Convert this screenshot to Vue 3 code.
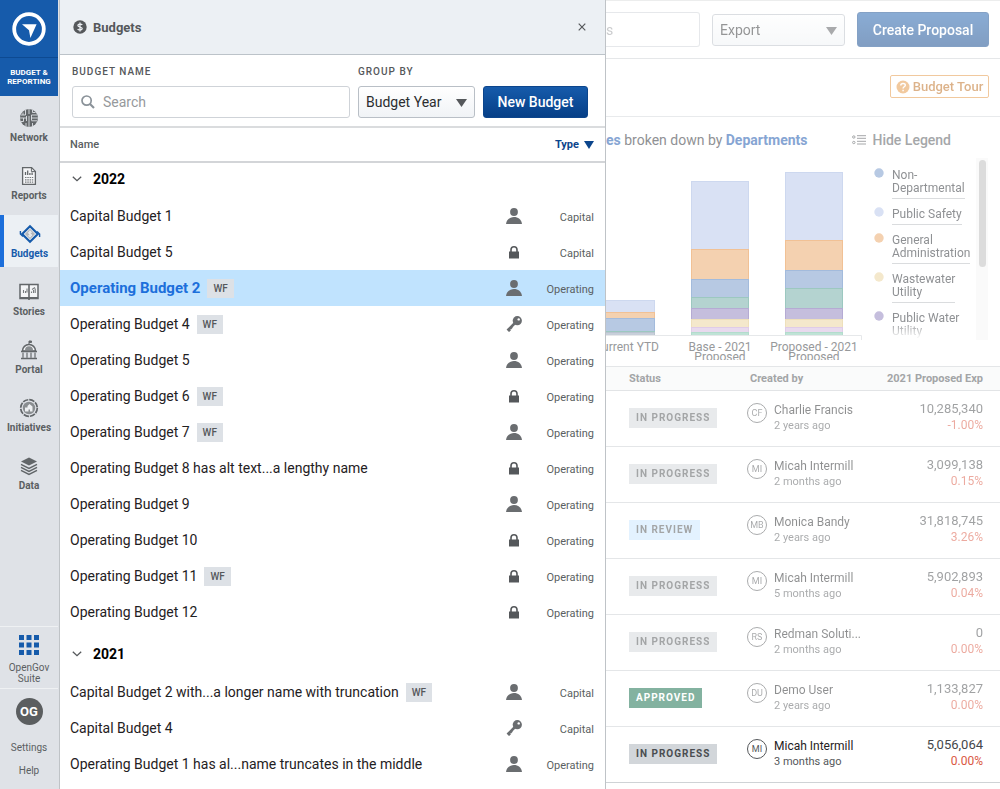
<script setup>
import { ref } from 'vue'

const nav = ['Network', 'Reports', 'Budgets', 'Stories', 'Portal', 'Initiatives', 'Data']
const groupBy = ref('Budget Year')
const search = ref('')

const groups = [
  {
    year: '2022',
    rows: [
      { name: 'Capital Budget 1', icon: 'user', type: 'Capital' },
      { name: 'Capital Budget 5', icon: 'lock', type: 'Capital' },
      { name: 'Operating Budget 2', wf: true, icon: 'user', type: 'Operating', selected: true },
      { name: 'Operating Budget 4', wf: true, icon: 'key', type: 'Operating' },
      { name: 'Operating Budget 5', icon: 'user', type: 'Operating' },
      { name: 'Operating Budget 6', wf: true, icon: 'lock', type: 'Operating' },
      { name: 'Operating Budget 7', wf: true, icon: 'user', type: 'Operating' },
      { name: 'Operating Budget 8 has alt text...a lengthy name', icon: 'lock', type: 'Operating' },
      { name: 'Operating Budget 9', icon: 'user', type: 'Operating' },
      { name: 'Operating Budget 10', icon: 'lock', type: 'Operating' },
      { name: 'Operating Budget 11', wf: true, icon: 'lock', type: 'Operating' },
      { name: 'Operating Budget 12', icon: 'lock', type: 'Operating' }
    ]
  },
  {
    year: '2021',
    rows: [
      { name: 'Capital Budget 2 with...a longer name with truncation', wf: true, icon: 'user', type: 'Capital' },
      { name: 'Capital Budget 4', icon: 'key', type: 'Capital' },
      { name: 'Operating Budget 1 has al...name truncates in the middle', icon: 'user', type: 'Operating' }
    ]
  }
]

const proposals = [
  { status: 'In Progress', kind: 'progress', initials: 'CF', name: 'Charlie Francis', ago: '2 years ago', amount: '10,285,340', pct: '-1.00%' },
  { status: 'In Progress', kind: 'progress', initials: 'MI', name: 'Micah Intermill', ago: '2 months ago', amount: '3,099,138', pct: '0.15%' },
  { status: 'In Review', kind: 'review', initials: 'MB', name: 'Monica Bandy', ago: '2 years ago', amount: '31,818,745', pct: '3.26%' },
  { status: 'In Progress', kind: 'progress', initials: 'MI', name: 'Micah Intermill', ago: '5 months ago', amount: '5,902,893', pct: '0.04%' },
  { status: 'In Progress', kind: 'progress', initials: 'RS', name: 'Redman Soluti...', ago: '2 months ago', amount: '0', pct: '0.00%' },
  { status: 'Approved', kind: 'approved', initials: 'DU', name: 'Demo User', ago: '2 years ago', amount: '1,133,827', pct: '0.00%' },
  { status: 'In Progress', kind: 'progress', initials: 'MI', name: 'Micah Intermill', ago: '3 months ago', amount: '5,056,064', pct: '0.00%', current: true }
]

const legend = [
  { lines: ['Non-', 'Departmental'], color: '#b7c9e3' },
  { lines: ['Public Safety'], color: '#d9e1f4' },
  { lines: ['General', 'Administration'], color: '#f4d1b0' },
  { lines: ['Wastewater', 'Utility'], color: '#f4e8cc' },
  { lines: ['Public Water', 'Utility'], color: '#c5bedd' }
]

const palette = {
  safety: ['#d9e1f4', '#cdd8ef'],
  admin: ['#f4d1b0', '#f1c195'],
  non: ['#b7c9e3', '#a3bbdc'],
  teal: ['#b4d3d0', '#9cc8c0'],
  water: ['#c5bedd', '#b5abd3'],
  waste: ['#f4e8cc', '#eee0bb'],
  pink: ['#e8daee', '#dfcce8'],
  mint: ['#bfe3d6', '#b3dccd'],
  gray: ['#c8cfda', '#b9c4d0']
}
const bars = [
  { x: -10, w: 59, segs: [['safety', 142, 12], ['admin', 154, 6], ['non', 160, 13], ['teal', 173, 1], ['gray', 174, 3]] },
  { x: 85, w: 58, segs: [['safety', 23, 68], ['admin', 91, 30], ['non', 121, 18], ['teal', 139, 11], ['water', 150, 11], ['waste', 161, 8], ['pink', 169, 5], ['mint', 174, 3]] },
  { x: 179, w: 58, segs: [['safety', 14, 68], ['admin', 82, 30], ['non', 112, 18], ['teal', 130, 20], ['water', 150, 11], ['waste', 161, 8], ['pink', 169, 5], ['mint', 174, 3]] }
]
</script>

<template>
  <div class="app">
    <aside class="sidebar">
      <a class="logo" href="#" aria-label="Home">
        <svg width="34" height="34" viewBox="0 0 34 34">
          <circle cx="17" cy="17" r="14.8" fill="none" stroke="#fff" stroke-width="3.8" />
          <path d="M10 12.3H24.6L18.4 26L17 18.2Z" fill="#fff" />
        </svg>
      </a>
      <div class="product">BUDGET &amp;<br />REPORTING</div>
      <nav class="nav">
        <a v-for="n in nav" :key="n" href="#" class="nav-item" :class="{ active: n === 'Budgets' }">
          <svg v-if="n === 'Network'" width="20" height="20" viewBox="0 0 20 20">
            <circle cx="10" cy="10" r="9" fill="#626669" />
            <path d="M10 1V6M10 8V19M1 10H8M12 10H19M6.500 2V7H2M13.500 2V4.500H16.500M12.500 7H18.500M12.500 7V12.500M4.500 10V13.500H2M7.500 8V13M7 15V18.500M13.500 15V18.500M12.500 12.800H18M4 7V4.500" fill="none" stroke="#dfe2e7" stroke-width=".9" />
          </svg>
          <svg v-else-if="n === 'Reports'" width="20" height="20" viewBox="0 0 20 20">
            <path d="M3.600 1.600H12.600L16.400 5.400V18.400H3.600Z" fill="#f4f5f7" stroke="#626669" stroke-width="1.300" />
            <path d="M12.400 1.600V5.600H16.400" fill="none" stroke="#626669" />
            <path d="M6.500 9V6M8.700 9V4.500M10.900 9V7M13.100 9V6.500" stroke="#626669" stroke-width="1.300" />
            <path d="M6 11.500H14.200M6 13.800H14.200M6 16.100H14.200" stroke="#777b7e" stroke-dasharray="1.500 .8" stroke-width="1.200" />
          </svg>
          <svg v-else-if="n === 'Budgets'" width="22" height="20" viewBox="0 0 22 20">
            <path d="M11 2.200L18.800 10L11 17.800L3.200 10Z" fill="#f4f7fa" stroke="#165bab" stroke-width="2.200" />
            <path d="M11 4.800L16.200 10L11 15.200L5.800 10Z" fill="#b4b8bd" />
            <path d="M12.800 8.500C12.400 7.600 9.400 7.600 9.400 8.900S12.700 9.700 12.700 11.100S9.600 12.500 9.200 11.500M11 6.600V13.400" fill="none" stroke="#f4f7fa" />
            <path d="M1.400 7V10L4 12.500M20.600 13V10L18 7.500" fill="none" stroke="#165bab" stroke-width="1.400" />
          </svg>
          <svg v-else-if="n === 'Stories'" width="20" height="20" viewBox="0 0 20 20">
            <path d="M1 2.500H19V16.500H1Z" fill="#f4f5f7" stroke="#626669" stroke-width="1.500" />
            <path d="M10 3V18" stroke="#626669" stroke-width="1.600" />
            <path d="M1 16H19" stroke="#626669" stroke-width="2" />
            <path d="M4.500 11V8M6.500 11V9M8 10.500V6.500M12.500 11V9.500M14.500 11V8M16.200 11V6.500M13 7.500L16 5.500" fill="none" stroke="#777b7e" stroke-width="1.100" />
          </svg>
          <svg v-else-if="n === 'Portal'" width="20" height="20" viewBox="0 0 20 20">
            <path d="M10 4V1H12.500V2.500H10" fill="#626669" stroke="#626669" />
            <path d="M3.500 11A6.500 6.500 0 0 1 16.500 11Z" fill="#f4f5f7" stroke="#626669" stroke-width="1.500" />
            <path d="M6 10A4 3.800 0 0 1 14 10Z" fill="#8a8e91" />
            <path d="M2 11.500H18M2 18.500H18" stroke="#626669" stroke-width="1.500" />
            <path d="M4 12.500V18M8 12.500V18M12 12.500V18M16 12.500V18" stroke="#8a8e91" stroke-width="1.700" />
          </svg>
          <svg v-else-if="n === 'Initiatives'" width="20" height="20" viewBox="0 0 20 20">
            <circle cx="10" cy="10" r="8.300" fill="none" stroke="#626669" stroke-width="1.700" stroke-dasharray="5.500 1.019" />
            <circle cx="10" cy="10" r="6.200" fill="#8a8e91" />
            <path d="M6 13.500V9.500H8.500V8L10.500 6L13.500 8.500V13.500H11V11.500H9.500V13.500Z" fill="#eef0f2" />
          </svg>
          <svg v-else width="20" height="20" viewBox="0 0 20 20">
            <path d="M10 1.500L18 5.500L10 9.500L2 5.500Z" fill="#626669" />
            <path d="M2 8.300L10 12.300L18 8.300M2 11.300L10 15.300L18 11.300M2 14.300L10 18.300L18 14.300" fill="none" stroke="#626669" stroke-width="1.500" />
          </svg>
          <span>{{ n }}</span>
        </a>
      </nav>
      <a class="suite" href="#">
        <svg width="20" height="20" viewBox="0 0 20 20" fill="#165bab">
          <path d="M0 0H5V5H0ZM7.500 0H12.500V5H7.500ZM15 0H20V5H15ZM0 7.500H5V12.500H0ZM7.500 7.500H12.500V12.500H7.500ZM15 7.500H20V12.500H15ZM0 15H5V20H0ZM7.500 15H12.500V20H7.500ZM15 15H20V20H15Z" />
        </svg>
        <span>OpenGov<br />Suite</span>
      </a>
      <div class="account">
        <button class="og" type="button">OG</button>
        <a href="#">Settings</a>
        <a href="#">Help</a>
      </div>
    </aside>

    <section class="drawer">
      <header class="drawer-head">
        <svg width="14" height="14" viewBox="0 0 14 14">
          <circle cx="7" cy="7" r="6.700" fill="#55585b" />
          <path d="M9.200 5C8.600 3.700 4.900 3.700 4.900 5.500S9.200 6.700 9.200 8.600S5.300 10.300 4.700 8.900M7 2.600V11.400" fill="none" stroke="#ecf0f4" stroke-width="1.300" />
        </svg>
        <h1>Budgets</h1>
        <button class="close" type="button" aria-label="Close">
          <svg width="8" height="8" viewBox="0 0 8 8"><path d="M.7 .7L7.300 7.300M7.300 .7L.7 7.300" stroke="#55585b" stroke-width="1.200" /></svg>
        </button>
      </header>

      <form class="filters" @submit.prevent>
        <div class="field grow">
          <label for="budget-name">BUDGET NAME</label>
          <div class="control">
            <svg class="mag" width="14" height="14" viewBox="0 0 14 14"><circle cx="5.600" cy="5.600" r="4.600" fill="none" stroke="#8a9299" stroke-width="1.700" /><path d="M9 9L13 13" stroke="#8a9299" stroke-width="2.200" /></svg>
            <input id="budget-name" v-model="search" type="text" placeholder="Search" />
          </div>
        </div>
        <div class="field">
          <label for="group-by">GROUP BY</label>
          <div class="control">
            <select id="group-by" v-model="groupBy" class="select"><option>Budget Year</option></select>
            <svg class="arrow" width="11" height="8" viewBox="0 0 11 8"><path d="M0 0H11L5.500 8Z" fill="#55585b" /></svg>
          </div>
        </div>
        <button class="primary" type="submit">New Budget</button>
      </form>

      <table class="budgets">
        <thead>
          <tr>
            <th class="c-name">Name</th>
            <th class="c-icon"></th>
            <th class="c-type"><button class="sort" type="button">Type <svg width="10" height="8" viewBox="0 0 10 8"><path d="M0 0H10L5 8Z" fill="#0c458c" /></svg></button></th>
          </tr>
        </thead>
        <tbody v-for="g in groups" :key="g.year">
          <tr class="group">
            <th colspan="3">
              <button type="button">
                <svg width="10" height="6" viewBox="0 0 10 6"><path d="M.8 .8L5 4.700L9.200 .8" fill="none" stroke="#55585b" stroke-width="1.300" /></svg>
                {{ g.year }}
              </button>
            </th>
          </tr>
          <tr v-for="r in g.rows" :key="r.name" class="budget" :class="{ selected: r.selected }">
            <td class="c-name"><div class="name"><a href="#">{{ r.name }}</a><span v-if="r.wf" class="wf">WF</span></div></td>
            <td class="c-icon">
              <svg v-if="r.icon === 'user'" width="16" height="16" viewBox="0 0 16 16" fill="#6a6d70"><circle cx="8" cy="4" r="3.900" /><path d="M0 16C.5 11.500 4 9 8 9S15.500 11.500 16 16Z" /></svg>
              <svg v-else-if="r.icon === 'lock'" width="16" height="16" viewBox="0 0 16 16"><path d="M3 7.500H13V14.500H3Z" fill="#55585b" /><path d="M5 8V5.800A3 3 0 0 1 11 5.800V8" fill="none" stroke="#55585b" stroke-width="1.600" /></svg>
              <svg v-else width="16" height="16" viewBox="0 0 16 16"><circle cx="11.300" cy="4.700" r="4.600" fill="#6a6d70" /><circle cx="12.700" cy="3.400" r="1.200" fill="#fff" /><path d="M8.500 7.500L1.500 14.500M2 13L4 15.200M4.500 11L6 12.500" stroke="#6a6d70" stroke-width="2.600" /></svg>
            </td>
            <td class="c-type">{{ r.type }}</td>
          </tr>
        </tbody>
      </table>
    </section>

    <main class="main">
      <div class="toolbar faded">
        <input class="filter" type="text" placeholder="s" aria-label="Filter proposals" />
        <div class="control export">
          <select class="select" aria-label="Export"><option>Export</option></select>
          <svg class="arrow" width="11" height="8" viewBox="0 0 11 8"><path d="M0 0H11L5.500 8Z" fill="#55585b" /></svg>
        </div>
        <button class="primary create" type="button">Create Proposal</button>
      </div>
      <div class="tour-row faded">
        <button class="tour" type="button">
          <svg width="14" height="14" viewBox="0 0 14 14"><circle cx="7" cy="7" r="6.500" fill="#e59440" /><path d="M4.800 5.500C4.800 2.800 9.300 2.800 9.300 5.200C9.300 6.800 7.100 6.700 7.100 8.500M7.100 9.700V11.200" fill="none" stroke="#fff" stroke-width="1.500" /></svg>
          Budget Tour
        </button>
      </div>
      <div class="chart-title">
        <p><a href="#">es</a> broken down by <a href="#">Departments</a></p>
        <button class="hide" type="button">
          <svg width="14" height="10" viewBox="0 0 14 10" fill="none" stroke="#a5a7a9"><circle cx="1.800" cy="2" r="1.200" /><circle cx="1.800" cy="7.500" r="1.200" /><path d="M5 .7H14M5 3.300H14M5 6.300H14M5 9H14" /></svg>
          Hide Legend
        </button>
      </div>
      <div class="chart">
        <svg class="plot" width="256" height="202" viewBox="0 0 256 202">
          <g v-for="b in bars" :key="b.x">
            <rect v-for="s in b.segs" :key="s[0]" :x="b.x + .5" :y="s[1] + .5" :width="b.w - 1" :height="s[2]" :fill="palette[s[0]][0]" :stroke="palette[s[0]][1]" />
          </g>
          <path d="M0 177.500H255.500V182" fill="none" stroke="#e6e8ea" />
          <g class="axis">
            <text x="53" y="193" text-anchor="end">Current YTD</text>
            <text x="114" y="193" text-anchor="middle">Base - 2021</text>
            <text x="114" y="203" text-anchor="middle">Proposed</text>
            <text x="208" y="193" text-anchor="middle">Proposed - 2021</text>
            <text x="208" y="203" text-anchor="middle">Proposed</text>
          </g>
        </svg>
        <ul class="legend">
          <li v-for="l in legend" :key="l.lines[0]">
            <svg width="10" height="10" viewBox="0 0 10 10"><circle cx="5" cy="5" r="4.700" :fill="l.color" /></svg>
            <span><template v-for="(t, i) in l.lines" :key="t"><br v-if="i" />{{ t }}</template></span>
          </li>
        </ul>
        <div class="track"><div class="thumb"></div></div>
      </div>
      <table class="proposals">
        <thead>
          <tr><th class="p-status">Status</th><th class="p-by">Created by</th><th class="p-exp">2021 Proposed Exp</th></tr>
        </thead>
        <tbody>
          <tr v-for="(p, i) in proposals" :key="i" :class="{ current: p.current }">
            <td class="p-status"><span class="badge" :class="p.kind">{{ p.status }}</span></td>
            <td class="p-by">
              <div class="person">
                <span class="avatar">{{ p.initials }}</span>
                <div><div class="who">{{ p.name }}</div><div class="ago">{{ p.ago }}</div></div>
              </div>
            </td>
            <td class="p-exp"><div class="amount">{{ p.amount }}</div><div class="pct">{{ p.pct }}</div></td>
          </tr>
        </tbody>
      </table>
    </main>
  </div>
</template>

<style>
body { background: #fff; }
</style>

<style scoped>
* { box-sizing: border-box; }
.app { display: flex; height: 100vh; overflow: hidden; font-family: Roboto, "Liberation Sans", sans-serif; font-size: 14px; color: #1f2123; }
a { color: inherit; text-decoration: none; }
button { font: inherit; color: inherit; background: none; border: 0; padding: 0; cursor: pointer; }
table { border-collapse: collapse; width: 100%; table-layout: fixed; }
th, td { padding: 0; text-align: left; }

.sidebar { flex: none; width: 60px; display: flex; flex-direction: column; padding-right: 1px; background: #dfe2e7; border-right: 1px solid #bfc3c7; color: #5b5f62; text-align: center; }
.logo { flex: none; height: 58px; background: #165bab; border-bottom: 1px solid #0d4a92; display: flex; align-items: center; justify-content: center; }
.product { flex: none; height: 38px; background: #165bab; color: #fff; font-size: 8px; line-height: 9px; font-weight: 700; padding-top: 10px; }
.nav { flex: 1; display: flex; flex-direction: column; gap: 6px; padding-top: 3px; }
.nav-item { height: 52px; display: flex; flex-direction: column; align-items: center; gap: 2px; padding-top: 9px; font-size: 10px; line-height: 16px; font-weight: 700; }
.nav-item.active { background: #ecf0f4; color: #165bab; border-left: 4px solid #1c6fdb; padding-right: 3px; }
.suite { flex: none; height: 62px; border-top: 1px solid #eff1f3; display: flex; flex-direction: column; align-items: center; gap: 7px; padding-top: 8px; font-size: 10px; line-height: 11px; }
.account { flex: none; height: 101px; border-top: 1px solid #eff1f3; display: flex; flex-direction: column; align-items: center; padding-top: 9px; font-size: 10px; line-height: 23px; }
.og { width: 27px; height: 27px; border-radius: 50%; background: #5b5e60; color: #fff; font-size: 13px; font-weight: 700; margin-bottom: 11px; }

.drawer { flex: none; width: 546px; border-right: 1px solid #bfc3c7; overflow: hidden; background: #fff; }
.drawer-head { height: 55px; display: flex; align-items: center; gap: 6px; padding: 0 19px 0 13px; background: #ecf0f4; border-bottom: 1px solid #bcc3c9; color: #55585b; }
.drawer-head h1 { margin: 0; font-size: 13px; font-weight: 700; }
.close { margin-left: auto; display: flex; }
.filters { display: flex; align-items: flex-end; gap: 8px; padding: 10px 17px 8px 12px; border-bottom: 2px solid #dadcde; }
.field { display: flex; flex-direction: column; gap: 7px; }
.field label { font-size: 10px; line-height: 14px; font-weight: 500; letter-spacing: 1px; color: #55585b; }
.grow { flex: 1; }
.control { position: relative; display: flex; }
.control input { width: 100%; height: 32px; padding: 0 8px 0 30px; border: 1px solid #cfd3d8; border-radius: 3px; font: inherit; }
input::placeholder { color: #96999c; opacity: 1; }
.mag { position: absolute; left: 9px; top: 9px; }
.select { appearance: none; width: 117px; height: 32px; padding: 0 7px; border: 1px solid #b9bfc6; border-radius: 3px; background: linear-gradient(#fff, #f0f3f6); font: inherit; color: #2b2d2f; }
.arrow { position: absolute; right: 8px; top: 13px; pointer-events: none; }
.primary { width: 105px; height: 32px; border-radius: 3px; border: 1px solid #0c458c; background: linear-gradient(#165bab, #063f87); color: #fff; font-weight: 500; }

.budgets thead tr { height: 34px; border-bottom: 2px solid #d3d5d8; }
.budgets thead th { font-size: 11px; font-weight: 500; color: #5b5f62; }
.budgets .c-name { padding-left: 10px; white-space: nowrap; }
.name { display: flex; align-items: center; gap: 7px; }
.budgets .c-icon { width: 46px; padding-left: 10px; }
.budgets .c-icon svg { display: block; }
.budgets .c-type { width: 63px; padding: 3px 11px 0 0; text-align: right; font-size: 11px; color: #5b5f62; }
.budgets thead .c-type { padding-top: 0; }
.sort { margin-left: auto; color: #0c458c; font-weight: 700; display: flex; align-items: center; gap: 5px; }
.group { height: 36px; }
.group button { display: flex; align-items: center; gap: 11px; padding: 0 0 4px 12px; font-size: 14px; font-weight: 700; color: #000; }
tbody + tbody .group { height: 44px; }
tbody + tbody .group button { padding-top: 8px; }
.budget { height: 36px; }
.selected { background: #c0e3fe; }
.selected a { color: #1c6fdb; font-weight: 700; font-size: 15px; }
.wf { padding: 0 6px; font-size: 10px; line-height: 19px; font-weight: 500; background: #dde1e6; color: #55585b; }

.main { flex: 1; min-width: 0; overflow: hidden; }
.faded > * { opacity: .5; }
.toolbar { display: flex; align-items: center; justify-content: flex-end; gap: 12px; height: 59px; padding-right: 11px; border-top: 1px solid #eceded; border-bottom: 1px solid #e5e7e9; }
.filter { flex: 1; min-width: 0; height: 35px; padding: 0; border: 1px solid #cfd3d8; border-left: 0; border-radius: 0 3px 3px 0; font: inherit; }
.export .select { width: 133px; }
.create { width: 132px; height: 35px; }
.tour-row { display: flex; align-items: center; justify-content: flex-end; height: 58px; padding: 0 11px 2px 0; border-bottom: 1px solid #e8eaec; }
.tour { display: flex; align-items: center; justify-content: center; gap: 3px; width: 99px; height: 23px; border: 1px solid #e59440; border-radius: 2px; color: #bb6817; font-size: 13px; font-weight: 500; white-space: nowrap; }
.chart-title { display: flex; align-items: center; justify-content: space-between; height: 41px; padding: 5px 49px 0 0; color: #8f9194; }
.chart-title p { margin: 0; }
.chart-title a { color: #86a5d3; font-weight: 700; }
.hide { display: flex; align-items: center; gap: 6px; font-weight: 500; color: #a5a7a9; }
.chart { display: flex; height: 209px; padding-right: 12px; overflow: hidden; border-bottom: 1px solid #e4e6e8; }
.plot { flex: none; }
.axis text { font-size: 12px; fill: #97999b; }
.legend { flex: 1; height: 181px; overflow: hidden; margin: 0; padding: 10px 0 0 12px; list-style: none; font-size: 12px; line-height: 13px; color: #8f9194; mask-image: linear-gradient(#000 164px, transparent); }
.legend li { display: flex; gap: 8px; margin-bottom: 10px; white-space: nowrap; }
.legend svg { flex: none; }
.legend span { border-bottom: 1px solid #dadcde; padding: 1px 0 3px; margin-bottom: -2px; }
.track { width: 12px; height: 182px; padding: 2px; background: #fafafa; }
.thumb { width: 7px; height: 107px; margin: 0 auto; border-radius: 4px; background: #dcdcdc; }

.proposals thead tr { height: 23px; background: #fafbfb; border-bottom: 1px solid #e2e4e6; }
.proposals th { font-size: 11px; font-weight: 700; color: #a3a5a7; }
.proposals tbody tr { height: 56px; border-bottom: 1px solid #e4e6e8; }
.proposals tbody td > * { opacity: .5; }
.proposals tbody .current td > * { opacity: 1; }
.proposals tbody .current { border-top: 1px solid #cfd3d6; border-bottom: 1px solid #cfd3d6; }
.proposals tbody .p-by, .proposals tbody .p-exp { padding-bottom: 2px; }
.p-status { width: 141px; padding-left: 23px; }
.proposals .p-exp { text-align: right; padding-right: 17px; }
.proposals thead .p-by { padding-left: 3px; }
.badge { display: inline-block; padding: 0 7px; font-size: 10px; line-height: 20px; font-weight: 700; letter-spacing: 1px; text-transform: uppercase; background: #d2d6da; color: #4a4d50; }
.badge.review { background: #c8e6ff; }
.proposals tbody .badge.approved { opacity: 1; background: #83b2a0; color: #fff; }
.person { display: flex; gap: 7px; }
.avatar { flex: none; width: 20px; height: 20px; margin-top: 1px; border: 1px solid #55585b; border-radius: 50%; font-size: 9px; line-height: 18px; text-align: center; color: #55585b; }
.who { font-size: 12px; line-height: 16px; color: #1f2123; white-space: nowrap; }
.ago { font-size: 11px; line-height: 15px; color: #55585b; }
.amount { font-size: 13px; line-height: 16px; color: #44474a; }
.pct { font-size: 12px; line-height: 16px; color: #da5843; }
</style>
